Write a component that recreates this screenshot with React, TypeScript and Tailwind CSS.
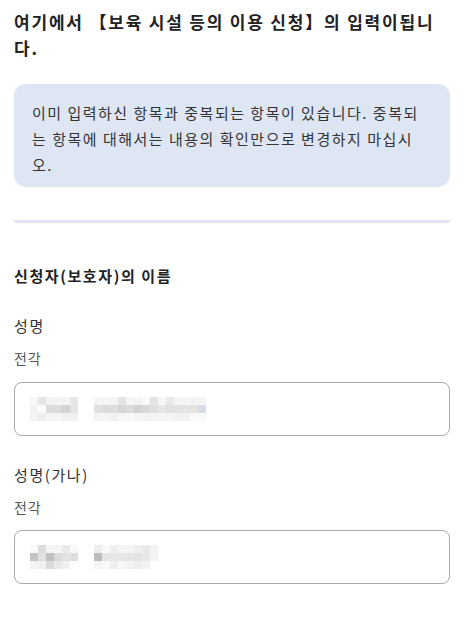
import React from 'react';

// pixelated (masked) values shown in the inputs
const maskedName: string[][][] = [
  [
    ['#f7f7f7', '#e4e5e6', '#f3f3f3', '#f3f3f3', '#f4f4f4', '#e5e6e6'],
    ['#f3f3f3', '#fbfdfd', '#dcdcdc', '#dcdcdc', '#d2d4d3', '#e2e3e3'],
    ['#f3f3f3', '#eeeeee', '#f4f4f4', '#f4f4f4', '#f1f0ef', '#f0f0f0'],
  ],
  [
    ['#f5f5f5', '#f5f5f5', '#f4f4f4', '#e3e3e3', '#f5f5f5', '#f4f4f4', '#fafafa', '#e4e4e4', '#f7f7f7', '#e8e9ea', '#f5f5f5', '#f5f5f5', '#f3f3f3', '#f4f4f4'],
    ['#e0e0e0', '#dcdcdc', '#dedede', '#d6d6d6', '#dcdcdc', '#d0d4d4', '#dadada', '#e0e0e0', '#e6e6e6', '#dde0e4', '#e2e2e2', '#e4e4e4', '#e5e2e2', '#d8dce4'],
    ['#f4f4f4', '#f4f4f4', '#f1f1f1', '#f6f6f6', '#f8f8f8', '#f4f4f4', '#f2f2f2', '#f4f4f4', '#f4f4f4', '#f4f4f4', '#f1f1f1', '#f1f1f1', '#f9f9f9', '#fafafa'],
  ],
];

const maskedKana: string[][][] = [
  [
    ['#fafafa', '#dddddd', '#f5f5f5', '#f5f5f5', '#e9e9e9', '#f8f8f8'],
    ['#c4c4c4', '#e0e2e3', '#c0c0c0', '#dadada', '#e3e3e3', '#dde0e0'],
    ['#f3f3f3', '#f1f1f1', '#dbdbdb', '#e9e9e9', '#f2f2f2', '#ffffff'],
  ],
  [
    ['#eeeeee', '#fafafa', '#eeeeee', '#f5f5f5', '#f5f5f5', '#eeeeee', '#e8e8e8', '#f3f3f3'],
    ['#bcbcbc', '#e5e5e5', '#e6e6e6', '#e6e6e6', '#e4e4e4', '#e3e3e3', '#e8e8e8', '#f3f3f3'],
    ['#f4f4f4', '#fafafa', '#eeeeee', '#f7f7f7', '#f3f3f3', '#eeeeee', '#f3f3f3', '#ffffff'],
  ],
];

const Mosaic = ({ groups }: { groups: string[][][] }) => (
  <div className="flex gap-[16px]">
    {groups.map((rows, g) => (
      <div key={g} className="flex flex-col">
        {rows.map((row, r) => (
          <div key={r} className="flex">
            {row.map((c, i) => (
              <span key={i} className="block w-[8px] h-[8px]" style={{ backgroundColor: c }} />
            ))}
          </div>
        ))}
      </div>
    ))}
  </div>
);

const MaskedInput = ({ groups }: { groups: string[][][] }) => (
  <div className="h-[54px] w-full rounded-[8px] border border-[#a9a9b2] bg-white flex items-center pl-[15px]">
    <Mosaic groups={groups} />
  </div>
);

const App = () => {
  return (
    <div
      className="min-h-screen bg-white px-[14px] pt-[9px] text-[#222]"
      style={{ fontFamily: '"Noto Sans CJK KR", "Noto Sans", sans-serif' }}
    >
      <h1 className="text-[17px] leading-[26px] font-bold tracking-[1.8px] text-[#222]">
        여기에서 【보육 시설 등의 이용 신청】의 입력이됩니다.
      </h1>

      <div className="mt-[23px] rounded-[12px] bg-[#dee6f4] px-[18px] pt-[16px] pb-[9px]">
        <p className="text-[15px] leading-[26px] tracking-[1.5px] text-[#333]">
          이미 입력하신 항목과 중복되는 항목이 있습니다. 중복되는 항목에 대해서는 내용의 확인만으로 변경하지 마십시오.
        </p>
      </div>

      <div className="mt-[33px] h-[3px] bg-[#e4e4f6]" />

      <h2 className="mt-[42px] text-[15px] leading-[22px] font-bold tracking-[1.6px] text-[#222]">
        신청자(보호자)의 이름
      </h2>

      <div className="mt-[28px] text-[15px] leading-[22px] tracking-[1.6px] text-[#333]">성명</div>
      <div className="mt-[11px] text-[14px] leading-[20px] tracking-[0.8px] text-[#555]">전각</div>
      <div className="mt-[14px]">
        <MaskedInput groups={maskedName} />
      </div>

      <div className="mt-[28px] text-[15px] leading-[22px] tracking-[1.6px] text-[#333]">성명(가나)</div>
      <div className="mt-[11px] text-[14px] leading-[20px] tracking-[0.8px] text-[#555]">전각</div>
      <div className="mt-[13px]">
        <MaskedInput groups={maskedKana} />
      </div>
    </div>
  );
};

export default App;
